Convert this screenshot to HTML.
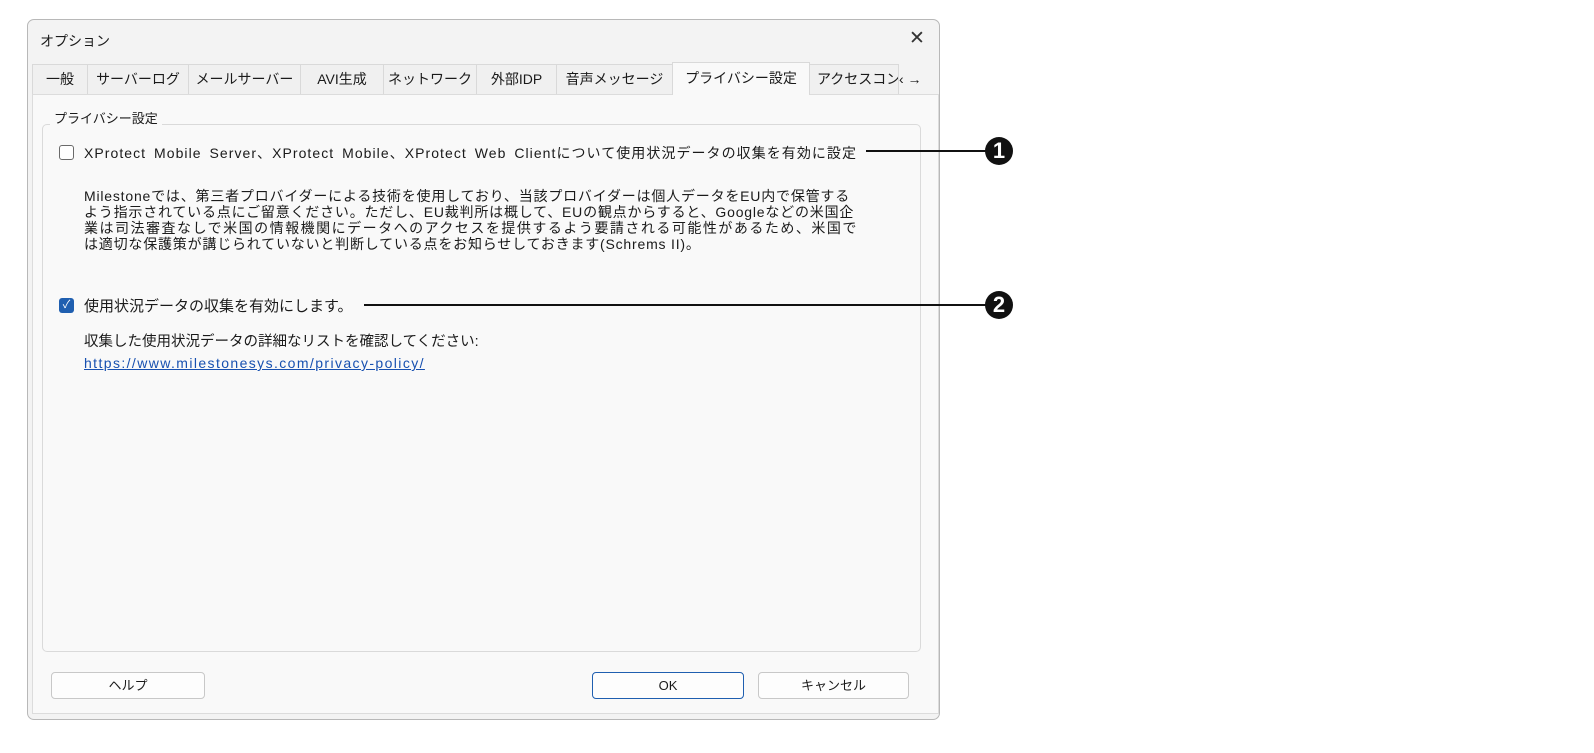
<!DOCTYPE html>
<html><head><meta charset="utf-8"><style>
body{margin:0;width:1594px;height:753px;background:#fff;position:relative;overflow:hidden;font-family:"Liberation Sans","Noto Sans CJK JP",sans-serif;color:#1a1a1a}
.a{position:absolute}
.win{left:27px;top:19px;width:913px;height:701px;border:1px solid #b8b8b8;border-radius:7px;background:#f3f3f3;box-sizing:border-box}
.tab{position:absolute;top:64px;height:30px;border:1px solid #d9d9d9;border-bottom:none;background:#f0f0f0;box-sizing:border-box;font-size:14px;line-height:29px;text-align:center;white-space:nowrap;overflow:hidden}
.t{white-space:nowrap;font-size:13px}
.btn{position:absolute;top:672px;height:27px;border:1px solid #c8c8c8;border-radius:4px;background:#fdfdfd;box-sizing:border-box;font-size:13px;text-align:center;line-height:25px}
.num{position:absolute;width:28px;height:28px;border-radius:50%;background:#111;color:#fff;font-weight:bold;font-size:22px;text-align:center;line-height:28px}
.ln{position:absolute;height:2px;background:#111}
</style></head><body>
<div class="a win"></div>
<div class="a" style="left:40px;top:31px;font-size:14px">オプション</div>
<div class="a" style="left:909px;top:27px;font-size:19px;font-weight:300;color:#333">✕</div>
<div class="a" style="left:32px;top:94px;width:907px;height:620px;background:#f9f9f9;border:1px solid #dcdcdc;box-sizing:border-box"></div>
<div class="tab" style="left:32px;width:56px">一般</div>
<div class="tab" style="left:87px;width:102px">サーバーログ</div>
<div class="tab" style="left:188px;width:113px">メールサーバー</div>
<div class="tab" style="left:300px;width:84px">AVI生成</div>
<div class="tab" style="left:383px;width:94px">ネットワーク</div>
<div class="tab" style="left:476px;width:81px">外部IDP</div>
<div class="tab" style="left:556px;width:117px">音声メッセージ</div>
<div class="tab" style="left:672px;width:138px;top:62px;height:33px;background:#f9f9f9;line-height:30px">プライバシー設定</div>
<div class="tab" style="left:809px;width:90px;text-align:left;padding-left:7px">アクセスコン</div>
<div class="a" style="left:899px;top:71px;font-size:14px">‹ →</div>
<div class="a" style="left:42px;top:124px;width:879px;height:528px;border:1px solid #dadada;border-radius:5px;box-sizing:border-box"></div>
<div class="a t" style="left:50px;top:108px;background:#f9f9f9;padding:0 4px;font-size:13px">プライバシー設定</div>
<div class="a" style="left:59px;top:145px;width:15px;height:15px;border:1px solid #6a6a6a;border-radius:3px;box-sizing:border-box;background:#fff"></div>
<div class="a t" style="left:84px;top:143px;font-size:14px;word-spacing:3px;letter-spacing:1.05px">XProtect Mobile Server、XProtect Mobile、XProtect Web Clientについて使用状況データの収集を有効に設定</div>
<div class="ln" style="left:866px;top:150px;width:120px"></div>
<div class="num" style="left:985px;top:137px">1</div>
<div class="a" style="left:84px;top:188px;font-size:14px;line-height:16px;white-space:nowrap;letter-spacing:0.8px">Milestoneでは、第三者プロバイダーによる技術を使用しており、当該プロバイダーは個人データをEU内で保管する<br>よう指示されている点にご留意ください。ただし、EU裁判所は概して、EUの観点からすると、Googleなどの米国企<br><span style="letter-spacing:1.5px">業は司法審査なしで米国の情報機関にデータへのアクセスを提供するよう要請される可能性があるため、米国で</span><br>は適切な保護策が講じられていないと判断している点をお知らせしておきます(Schrems II)。</div>
<div class="a" style="left:59px;top:298px;width:15px;height:15px;border-radius:3px;background:#1f5fb0;color:#fff;font-size:11px;line-height:15px;text-align:center">✓</div>
<div class="a t" style="left:84px;top:295px;font-size:15px">使用状況データの収集を有効にします。</div>
<div class="ln" style="left:364px;top:304px;width:622px"></div>
<div class="num" style="left:985px;top:291px">2</div>
<div class="a t" style="left:84px;top:330px;font-size:14.5px">収集した使用状況データの詳細なリストを確認してください:</div>
<div class="a t" style="left:84px;top:355px;font-size:14px;letter-spacing:1.4px;color:#1750b0;text-decoration:underline">https://www.milestonesys.com/privacy-policy/</div>
<div class="btn" style="left:51px;width:154px">ヘルプ</div>
<div class="btn" style="left:592px;width:152px;border-color:#1f5fb0">OK</div>
<div class="btn" style="left:758px;width:151px">キャンセル</div>
</body></html>
